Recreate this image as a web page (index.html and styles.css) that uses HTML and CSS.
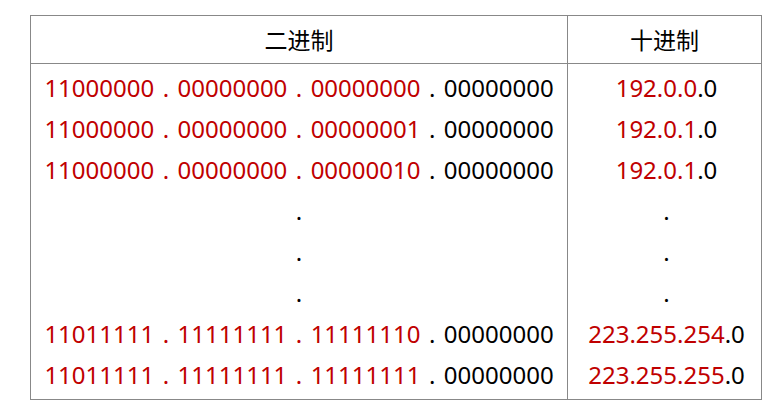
FILE: index.html
```html
<!DOCTYPE html>
<html lang="zh-CN">
<head>
<meta charset="utf-8">
<title>IP 地址表</title>
<link rel="stylesheet" href="styles.css">
</head>
<body>
<div class="table">
  <div class="cell head">二进制</div>
  <div class="cell head right">十进制</div>
  <div class="cell body bin">
    <p><span class="r">11000000 . 00000000 . 00000000</span> . 00000000</p>
    <p><span class="r">11000000 . 00000000 . 00000001</span> . 00000000</p>
    <p><span class="r">11000000 . 00000000 . 00000010</span> . 00000000</p>
    <p>.</p>
    <p>.</p>
    <p>.</p>
    <p><span class="r">11011111 . 11111111 . 11111110</span> . 00000000</p>
    <p><span class="r">11011111 . 11111111 . 11111111</span> . 00000000</p>
  </div>
  <div class="cell body right">
    <p><span class="r">192.0.0</span>.0</p>
    <p><span class="r">192.0.1</span>.0</p>
    <p><span class="r">192.0.1</span>.0</p>
    <p>.</p>
    <p>.</p>
    <p>.</p>
    <p><span class="r">223.255.254</span>.0</p>
    <p><span class="r">223.255.255</span>.0</p>
  </div>
</div>
</body>
</html>
```
FILE: styles.css
```css
html, body {
  margin: 0;
  padding: 0;
  background: #ffffff;
}
body {
  padding: 15px 0 0 30px;
  font-family: "Noto Sans", "Noto Sans CJK SC", sans-serif;
  font-size: 24px;
  color: #000000;
}
.table {
  display: grid;
  grid-template-columns: 536px 194px;
  grid-template-rows: 48px auto;
  width: max-content;
  border: 1px solid #888888;
}
.cell {
  box-sizing: border-box;
  text-align: center;
}
.right {
  border-left: 1px solid #888888;
}
.head {
  border-bottom: 1px solid #888888;
  display: flex;
  align-items: center;
  justify-content: center;
  font-family: "Noto Sans CJK SC", sans-serif;
  font-size: 23px;
  line-height: 1;
}
.body {
  padding: 3px 0 4px;
}
.body p {
  margin: 0;
  height: 41px;
  line-height: 41px;
  white-space: pre;
}
.bin p {
  word-spacing: 2.2px;
}
.right p {
  padding-left: 4px;
}
.r {
  color: #c00000;
}
```
